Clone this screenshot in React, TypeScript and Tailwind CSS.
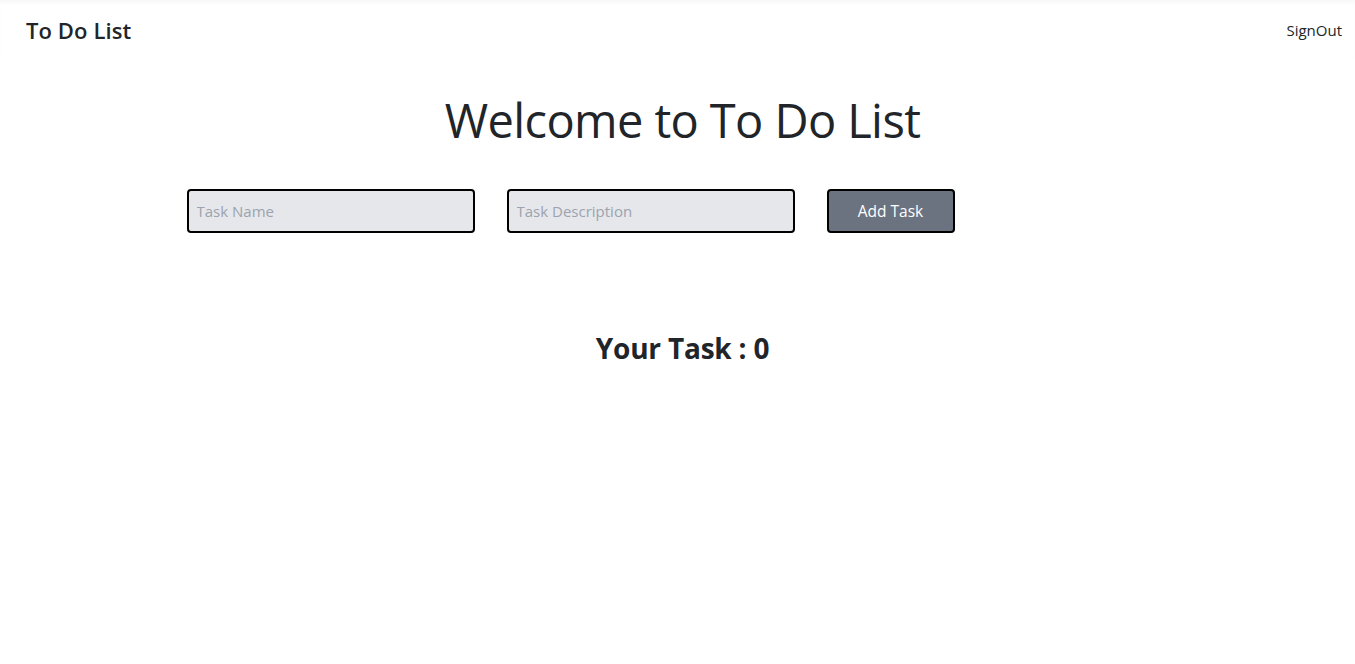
import React from "react";

export default function App() {
  return (
    <div className="min-h-screen bg-white text-[#212529]" style={{ fontFamily: '"Open Sans", "Noto Sans", sans-serif' }}>
      <nav className="flex items-center justify-between h-[60px] pl-[26px] pr-[13px] shadow-[inset_0_4px_4px_-2px_rgba(0,0,0,0.04)]">
        <span className="text-[22px] font-semibold tracking-[0.1px] pt-[1px]">To Do List</span>
        <span className="text-[15px] tracking-[0px]">SignOut</span>
      </nav>
      <div className="flex flex-col items-center">
        <h1 className="mt-[28px] text-[47px] leading-[64px] font-normal tracking-[-0.6px] pl-[10px]">Welcome to To Do List</h1>
        <div className="mt-[37px] flex items-center gap-8 ml-[-214px]">
          <input
            placeholder="Task Name"
            className="w-[288px] h-[44px] rounded border-2 border-black bg-[#e5e7eb] px-2 text-[15px] placeholder:text-[#9ca3af] outline-none"
          />
          <input
            placeholder="Task Description"
            className="w-[288px] h-[44px] rounded border-2 border-black bg-[#e5e7eb] px-2 text-[15px] placeholder:text-[#9ca3af] outline-none"
          />
          <button className="w-[128px] h-[44px] flex items-center justify-center pt-[2px] rounded border-2 border-black bg-[#6b7280] text-white text-[15.5px] leading-none">
            Add Task
          </button>
        </div>
        <h2 className="mt-[94px] text-[28px] font-bold tracking-[-0.2px] pl-[10px]">Your Task : 0</h2>
      </div>
    </div>
  );
}
